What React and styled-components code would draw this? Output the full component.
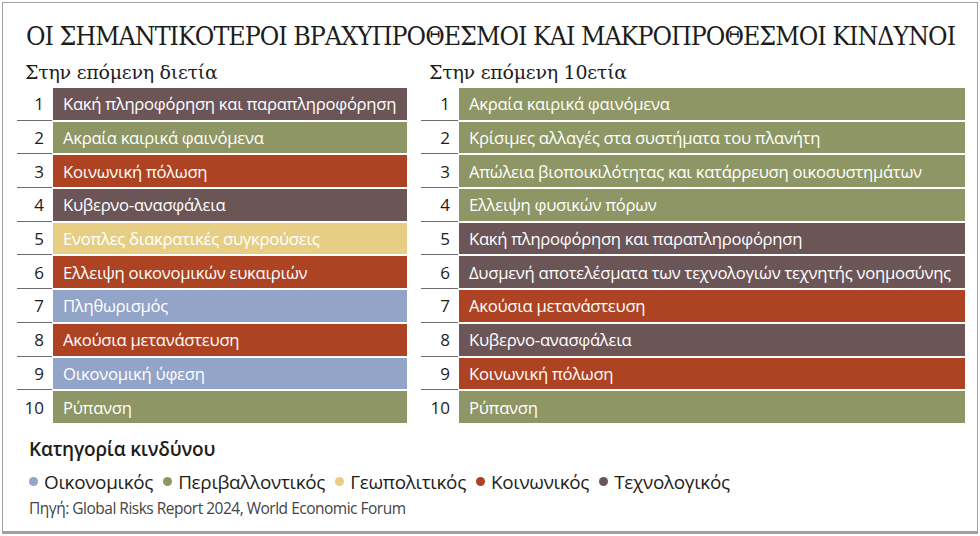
import React from "react";
import styled, { createGlobalStyle } from "styled-components";

const COLORS = {
  econ: "#93a4c9",
  env: "#8d9664",
  geo: "#e6cf84",
  soc: "#ad4322",
  tech: "#6c5557",
};

const shortTerm = [
  ["Κακή πληροφόρηση και παραπληροφόρηση", "tech"],
  ["Ακραία καιρικά φαινόμενα", "env"],
  ["Κοινωνική πόλωση", "soc"],
  ["Κυβερνο-ανασφάλεια", "tech"],
  ["Ενοπλες διακρατικές συγκρούσεις", "geo"],
  ["Ελλειψη οικονομικών ευκαιριών", "soc"],
  ["Πληθωρισμός", "econ"],
  ["Ακούσια μετανάστευση", "soc"],
  ["Οικονομική ύφεση", "econ"],
  ["Ρύπανση", "env"],
];

const longTerm = [
  ["Ακραία καιρικά φαινόμενα", "env"],
  ["Κρίσιμες αλλαγές στα συστήματα του πλανήτη", "env"],
  ["Απώλεια βιοποικιλότητας και κατάρρευση οικοσυστημάτων", "env"],
  ["Ελλειψη φυσικών πόρων", "env"],
  ["Κακή πληροφόρηση και παραπληροφόρηση", "tech"],
  ["Δυσμενή αποτελέσματα των τεχνολογιών τεχνητής νοημοσύνης", "tech"],
  ["Ακούσια μετανάστευση", "soc"],
  ["Κυβερνο-ανασφάλεια", "tech"],
  ["Κοινωνική πόλωση", "soc"],
  ["Ρύπανση", "env"],
];

const legend = [
  ["Οικονομικός", "econ"],
  ["Περιβαλλοντικός", "env"],
  ["Γεωπολιτικός", "geo"],
  ["Κοινωνικός", "soc"],
  ["Τεχνολογικός", "tech"],
];

const GlobalStyle = createGlobalStyle`
  html, body {
    margin: 0;
    padding: 0;
    background: #ffffff;
  }
  body {
    font-family: "Open Sans", "Noto Sans", sans-serif;
  }
`;

const Frame = styled.div`
  box-sizing: border-box;
  width: 976px;
  height: 532px;
  margin: 2px 0 0 2px;
  border: 1.5px solid #9f9f9f;
  border-bottom-width: 3px;
  padding: 14px 0 0 14px;
  background: #fff;
`;

const Title = styled.h1`
  margin: 0 0 0 9px;
  font-family: "DejaVu Serif", serif;
  font-stretch: condensed;
  font-weight: normal;
  font-size: 26.5px;
  letter-spacing: -1px;
  color: #1d1d1b;
  line-height: 38px;
  white-space: nowrap;
`;

const Columns = styled.div`
  display: flex;
  gap: 14px;
  margin-top: 4px;
`;

const Column = styled.div`
  width: ${(p) => p.$width}px;
`;

const Subtitle = styled.div`
  margin-left: 8px;
  font-family: "DejaVu Serif", serif;
  font-size: 19px;
  letter-spacing: -0.25px;
  color: #1d1d1b;
  line-height: 26px;
`;

const List = styled.div`
  display: flex;
  flex-direction: column;
  gap: 2px;
  margin-top: 3px;
`;

const Row = styled.div`
  display: grid;
  grid-template-columns: ${(p) => p.$num}px 1fr;
  height: 31.7px;
`;

const Num = styled.div`
  display: flex;
  align-items: center;
  justify-content: flex-end;
  padding-right: 8px;
  font-size: 17px;
  color: #1d1d1b;
  border-bottom: ${(p) => (p.$last ? "none" : "1px solid #6d6d6d")};
  margin-bottom: ${(p) => (p.$last ? "0" : "-1px")};
  margin-right: 1px;
`;

const Bar = styled.div`
  display: flex;
  align-items: center;
  padding-left: 10px;
  background: ${(p) => COLORS[p.$cat]};
  color: #fff;
  font-size: 16.7px;
  letter-spacing: -0.3px;
  white-space: nowrap;
  overflow: hidden;
`;

const LegendTitle = styled.div`
  margin: 13px 0 0 12px;
  font-size: 19px;
  font-weight: 600;
  letter-spacing: -0.2px;
  color: #1d1d1b;
`;

const LegendRow = styled.div`
  display: flex;
  gap: 10px;
  margin: 7px 0 0 12px;
`;

const LegendItem = styled.div`
  display: flex;
  align-items: center;
  gap: 6px;
  font-size: 18.9px;
  letter-spacing: -0.3px;
  color: #1d1d1b;
`;

const Dot = styled.span`
  width: 9px;
  height: 9px;
  border-radius: 50%;
  background: ${(p) => COLORS[p.$cat]};
`;

const Source = styled.div`
  margin: 2px 0 0 12px;
  font-size: 15.5px;
  letter-spacing: -0.5px;
  color: #444;
`;

const RiskList = ({ items, num }) => (
  <List>
    {items.map(([label, cat], i) => (
      <Row key={i} $num={num}>
        <Num $last={i === items.length - 1}>{i + 1}</Num>
        <Bar $cat={cat}>{label}</Bar>
      </Row>
    ))}
  </List>
);

export default function App() {
  return (
    <>
      <GlobalStyle />
      <Frame>
        <Title>ΟΙ ΣΗΜΑΝΤΙΚΟΤΕΡΟΙ ΒΡΑΧΥΠΡΟΘΕΣΜΟΙ ΚΑΙ ΜΑΚΡΟΠΡΟΘΕΣΜΟΙ ΚΙΝΔΥΝΟΙ</Title>
        <Columns>
          <Column $width={390}>
            <Subtitle>Στην επόμενη διετία</Subtitle>
            <RiskList items={shortTerm} num={36} />
          </Column>
          <Column $width={544}>
            <Subtitle>Στην επόμενη 10ετία</Subtitle>
            <RiskList items={longTerm} num={38} />
          </Column>
        </Columns>
        <LegendTitle>Κατηγορία κινδύνου</LegendTitle>
        <LegendRow>
          {legend.map(([label, cat]) => (
            <LegendItem key={cat}>
              <Dot $cat={cat} />
              {label}
            </LegendItem>
          ))}
        </LegendRow>
        <Source>Πηγή: Global Risks Report 2024, World Economic Forum</Source>
      </Frame>
    </>
  );
}
